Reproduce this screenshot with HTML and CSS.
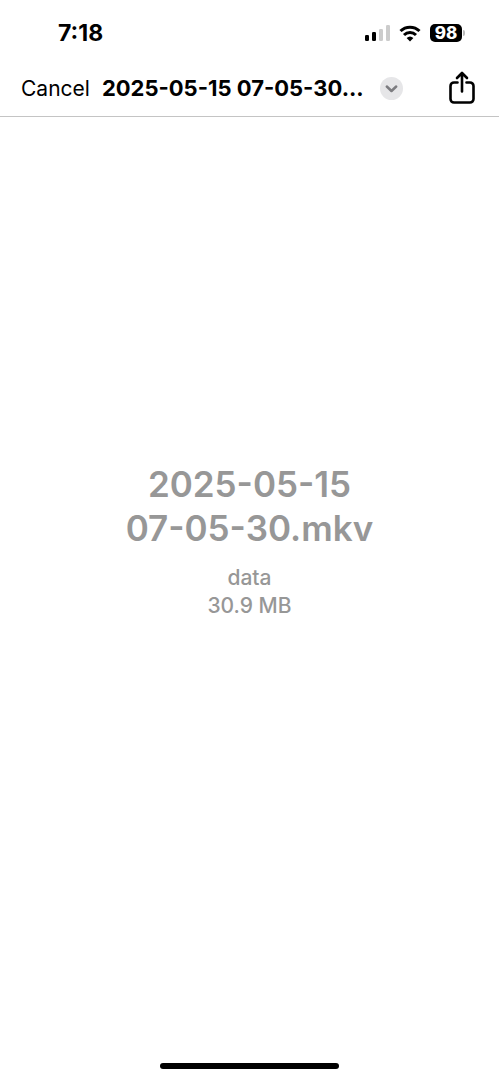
FILE: index.html
```html
<!DOCTYPE html>
<html lang="en">
<head>
<meta charset="utf-8">
<meta name="viewport" content="width=device-width, initial-scale=1">
<title>2025-05-15 07-05-30.mkv</title>
<link rel="stylesheet" href="styles.css">
</head>
<body>
<div class="screen">
  <div class="status">
    <time class="clock">7:18</time>
    <div class="indicators">
      <svg class="signal" width="25" height="17" viewBox="0 0 25 17" aria-hidden="true">
        <rect x="0" y="10" width="4" height="6" rx="1.2"/>
        <rect x="7" y="7" width="4" height="9" rx="1.2"/>
        <rect class="dim" x="14" y="4" width="4" height="12" rx="1.2"/>
        <rect class="dim" x="21" y="0" width="4" height="16" rx="1.2"/>
      </svg>
      <svg class="wifi" width="22" height="17" viewBox="0 0 22 17" aria-hidden="true">
        <path d="M1.500 6a13.600 13.600 0 0 1 19 0"/>
        <path d="M5 10a8.600 8.600 0 0 1 12 0"/>
        <path class="dot" d="M7.600 13a5 5 0 0 1 6.800 0L11 16.500z"/>
      </svg>
      <div class="battery"><span class="level">98</span><span class="cap"></span></div>
    </div>
  </div>
  <header class="bar">
    <button class="cancel" type="button">Cancel</button>
    <h1 class="title">2025-05-15 07-05-30...</h1>
    <button class="more" type="button" aria-label="File options">
      <svg width="23" height="23" viewBox="0 0 23 23" aria-hidden="true"><path d="M6.800 9.500l4.700 4.500 4.700-4.500"/></svg>
    </button>
    <button class="share" type="button" aria-label="Share">
      <svg width="28" height="34" viewBox="0 0 28 34" aria-hidden="true">
        <path d="M9.500 11.500H6a3.500 3.500 0 0 0-3.500 3.500v13A3.500 3.500 0 0 0 6 31.500h16a3.500 3.500 0 0 0 3.500-3.500V15a3.500 3.500 0 0 0-3.500-3.500h-3.500"/>
        <path class="arrow" d="M14 20.500V2.500M9 7L14 2l5 5"/>
      </svg>
    </button>
  </header>
  <main class="preview">
    <h2 class="name">2025-05-15<br>07-05-30.mkv</h2>
    <p class="meta">data<br>30.9 MB</p>
  </main>
  <div class="home"></div>
</div>
</body>
</html>
```
FILE: styles.css
```css
* {
  box-sizing: border-box;
}

body {
  margin: 0;
  background: #fff;
  color: #000;
  font-family: Inter, "Liberation Sans", sans-serif;
}

button {
  padding: 0;
  border: 0;
  background: none;
  color: inherit;
  font: inherit;
}

svg {
  display: block;
}

.screen {
  display: flex;
  flex-direction: column;
  min-height: 100vh;
}

.status {
  display: flex;
  align-items: center;
  justify-content: space-between;
  height: 60px;
  padding: 6px 34px 0 58px;
}

.clock {
  font-size: 23px;
  font-weight: 700;
}

.indicators {
  display: flex;
  align-items: center;
  gap: 9px;
}

.signal .dim {
  fill: #ccc;
}

.wifi {
  fill: none;
  stroke: #000;
  stroke-width: 3;
}

.wifi .dot {
  fill: #000;
  stroke: none;
}

.battery {
  display: flex;
  align-items: center;
  gap: 1px;
}

.level {
  width: 32px;
  border-radius: 5px;
  background: #000;
  color: #fff;
  font-size: 17px;
  font-weight: 800;
  line-height: 18px;
  text-align: center;
}

.cap {
  width: 2px;
  height: 6px;
  border-radius: 0 2px 2px 0;
  background: #bbb;
}

.bar {
  display: flex;
  align-items: center;
  height: 57px;
  padding: 0 23px 0 21px;
  border-bottom: 1px solid #c4c4c4;
}

.cancel {
  font-size: 21px;
}

.title {
  margin: 0 0 0 12px;
  font-size: 22px;
  font-weight: 700;
  white-space: nowrap;
}

.more {
  margin-left: 16px;
  border-radius: 50%;
  background: #e6e6e8;
}

.more path {
  fill: none;
  stroke: #7c7c80;
  stroke-width: 2.5;
  stroke-linecap: round;
  stroke-linejoin: round;
}

.share {
  margin-left: auto;
}

.share path {
  fill: none;
  stroke: #000;
  stroke-width: 2.6;
  stroke-linecap: round;
  stroke-linejoin: round;
}

.preview {
  display: flex;
  flex: 1;
  flex-direction: column;
  align-items: center;
  justify-content: center;
  padding-bottom: 98px;
  color: #979797;
  text-align: center;
}

.name {
  margin: 0;
  font-size: 35px;
  font-weight: 600;
  line-height: 44px;
}

.meta {
  margin: 14px 0 0;
  font-size: 21px;
  font-weight: 500;
  line-height: 28px;
}

.home {
  align-self: center;
  width: 36%;
  height: 6px;
  margin-bottom: 11px;
  border-radius: 3px;
  background: #000;
}
```
